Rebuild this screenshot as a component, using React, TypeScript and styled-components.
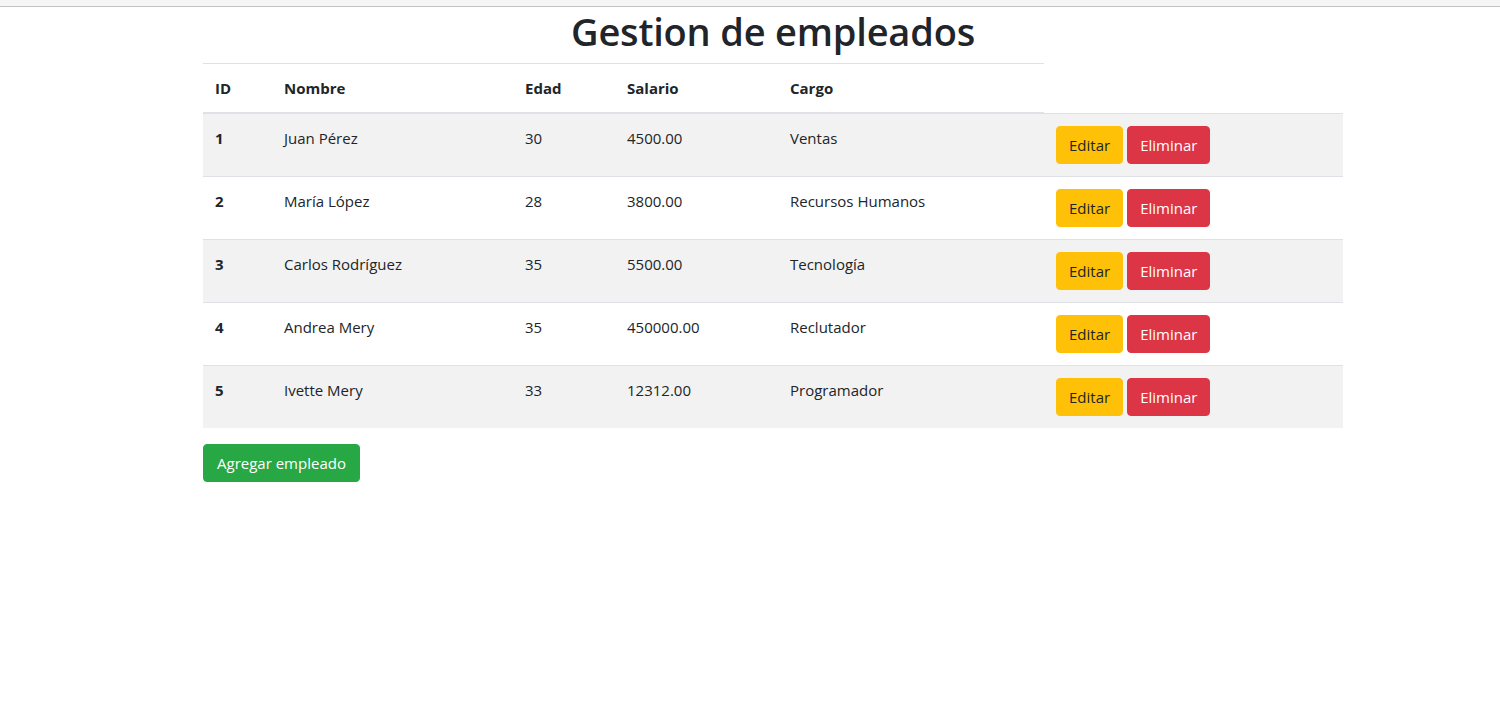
import React from "react";
import styled, { createGlobalStyle } from "styled-components";

const Global = createGlobalStyle`
  html, body { margin: 0; padding: 0; background: #fff; }
  body {
    font-family: "Open Sans", "Noto Sans", sans-serif;
    font-size: 15px;
    line-height: 24px;
    color: #212529;
  }
  * { box-sizing: border-box; }
`;

const TopBar = styled.div`
  height: 7px;
  background: #f5f5f5;
  border-bottom: 1px solid #c3c3c3;
`;

const Container = styled.div`
  width: 1140px;
  margin: 0 0 0 203px;
`;

const Title = styled.h1`
  margin: 0 0 8px;
  font-size: 38px;
  line-height: 48px;
  font-weight: 600;
  text-align: center;
  letter-spacing: -0.2px;
`;

const Table = styled.table`
  width: 100%;
  border-collapse: collapse;
  margin-bottom: 16px;
`;

const Th = styled.th`
  text-align: left;
  font-weight: 700;
  padding: 12px;
  border-top: 1px solid #dee2e6;
  border-bottom: 2px solid #dee2e6;
  vertical-align: bottom;
`;

const Row = styled.tr<{ $striped: boolean }>`
  background: ${(p) => (p.$striped ? "#f2f2f2" : "transparent")};
`;

const Td = styled.td<{ $bold?: boolean }>`
  padding: 12px;
  border-top: 1px solid #dee2e6;
  vertical-align: top;
  font-weight: ${(p) => (p.$bold ? 700 : 400)};
`;

const Actions = styled.div`
  display: flex;
  gap: 4px;
`;

const Button = styled.button<{ $variant: "warning" | "danger" | "success" }>`
  font-family: inherit;
  font-size: 15px;
  line-height: 24px;
  padding: 6px 12px;
  border-radius: 4px;
  cursor: pointer;
  border: 1px solid
    ${(p) =>
      p.$variant === "warning" ? "#ffc107" : p.$variant === "danger" ? "#dc3545" : "#28a745"};
  background: ${(p) =>
    p.$variant === "warning" ? "#ffc107" : p.$variant === "danger" ? "#dc3545" : "#28a745"};
  color: ${(p) => (p.$variant === "warning" ? "#212529" : "#fff")};
`;

const AddButton = styled(Button)`
  padding: 6px 13px;
`;

const employees = [
  { id: 1, nombre: "Juan Pérez", edad: 30, salario: "4500.00", cargo: "Ventas" },
  { id: 2, nombre: "María López", edad: 28, salario: "3800.00", cargo: "Recursos Humanos" },
  { id: 3, nombre: "Carlos Rodríguez", edad: 35, salario: "5500.00", cargo: "Tecnología" },
  { id: 4, nombre: "Andrea Mery", edad: 35, salario: "450000.00", cargo: "Reclutador" },
  { id: 5, nombre: "Ivette Mery", edad: 33, salario: "12312.00", cargo: "Programador" },
];

export default function App() {
  return (
    <>
      <Global />
      <TopBar />
      <Container>
        <Title>Gestion de empleados</Title>
        <Table>
          <colgroup>
            <col style={{ width: 69 }} />
            <col style={{ width: 241 }} />
            <col style={{ width: 102 }} />
            <col style={{ width: 163 }} />
            <col style={{ width: 266 }} />
            <col style={{ width: 299 }} />
          </colgroup>
          <thead>
            <tr>
              <Th>ID</Th>
              <Th>Nombre</Th>
              <Th>Edad</Th>
              <Th>Salario</Th>
              <Th>Cargo</Th>
            </tr>
          </thead>
          <tbody>
            {employees.map((e, i) => (
              <Row key={e.id} $striped={i % 2 === 0}>
                <Td $bold>{e.id}</Td>
                <Td>{e.nombre}</Td>
                <Td>{e.edad}</Td>
                <Td>{e.salario}</Td>
                <Td>{e.cargo}</Td>
                <Td>
                  <Actions>
                    <Button $variant="warning">Editar</Button>
                    <Button $variant="danger">Eliminar</Button>
                  </Actions>
                </Td>
              </Row>
            ))}
          </tbody>
        </Table>
        <AddButton $variant="success">Agregar empleado</AddButton>
      </Container>
    </>
  );
}
